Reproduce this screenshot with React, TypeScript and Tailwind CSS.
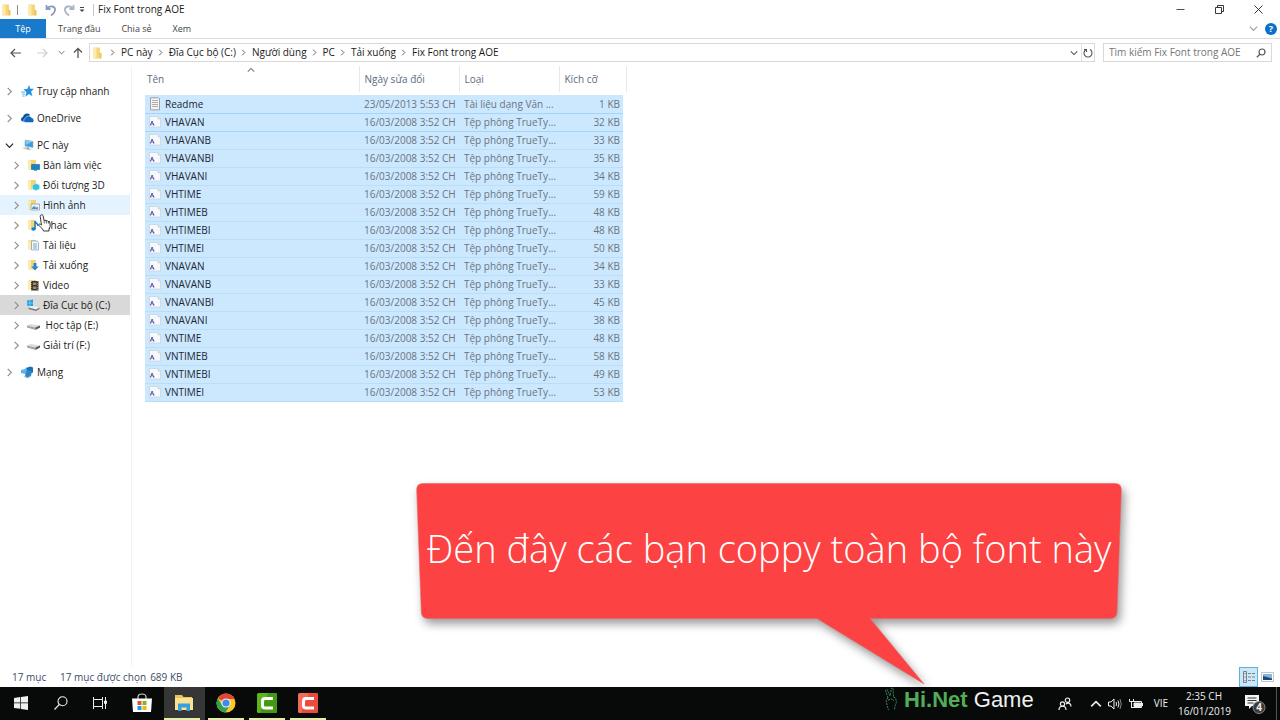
import type { ReactNode } from "react";
import clsx from "clsx";

type IconName =
  | "star"
  | "cloud"
  | "pc"
  | "desktop"
  | "cube"
  | "picture"
  | "music"
  | "document"
  | "download"
  | "video"
  | "system"
  | "drive"
  | "network";

const treeGroups: { icon: IconName; label: string; open?: boolean; children?: { icon: IconName; label: string }[] }[] = [
  { icon: "star", label: "Truy cập nhanh" },
  { icon: "cloud", label: "OneDrive" },
  {
    icon: "pc",
    label: "PC này",
    open: true,
    children: [
      { icon: "desktop", label: "Bàn làm việc" },
      { icon: "cube", label: "Đối tượng 3D" },
      { icon: "picture", label: "Hình ảnh" },
      { icon: "music", label: "Nhạc" },
      { icon: "document", label: "Tài liệu" },
      { icon: "download", label: "Tải xuống" },
      { icon: "video", label: "Video" },
      { icon: "system", label: "Đĩa Cục bộ (C:)" },
      { icon: "drive", label: "\u00a0Học tập (E:)" },
      { icon: "drive", label: "Giải trí (F:)" },
    ],
  },
  { icon: "network", label: "Mạng" },
];

const fonts: [string, number][] = [
  ["VHAVAN", 32],
  ["VHAVANB", 33],
  ["VHAVANBI", 35],
  ["VHAVANI", 34],
  ["VHTIME", 59],
  ["VHTIMEB", 48],
  ["VHTIMEBI", 48],
  ["VHTIMEI", 50],
  ["VNAVAN", 34],
  ["VNAVANB", 33],
  ["VNAVANBI", 45],
  ["VNAVANI", 38],
  ["VNTIME", 48],
  ["VNTIMEB", 58],
  ["VNTIMEBI", 49],
  ["VNTIMEI", 53],
];

const files = [
  { name: "Readme", date: "23/05/2013 5:53 CH", type: "Tài liệu dạng Văn ...", size: 1, text: true },
  ...fonts.map(([name, size]) => ({
    name,
    date: "16/03/2008 3:52 CH",
    type: "Tệp phông TrueTy...",
    size,
    text: false,
  })),
];

const path = ["PC này", "Đĩa Cục bộ (C:)", "Người dùng", "PC", "Tải xuống", "Fix Font trong AOE"];

function Chevron({ dir, className }: { dir: "right" | "down" | "up"; className?: string }) {
  const d = { right: "M3 1l4 4-4 4", down: "M1 3l4 4 4-4", up: "M1 7l4-4 4 4" }[dir];
  return (
    <svg viewBox="0 0 10 10" className={clsx("shrink-0", className)} fill="none" stroke="currentColor" strokeWidth="1.3">
      <path d={d} />
    </svg>
  );
}

function Folder({ className }: { className?: string }) {
  return (
    <svg viewBox="0 0 9 12" className={clsx("shrink-0", className)}>
      <path d="M.5.500H7v11H.5z" fill="#f5d47a" />
      <path d="M.5.500l3 1v10l-3-1z" fill="#fde9a9" />
      <path d="M6.500 6H8.500v5.500h-2z" fill="#edc35a" />
    </svg>
  );
}

function TreeIcon({ name }: { name: IconName }) {
  const art: Record<IconName, ReactNode> = {
    star: (
      <>
        <path d="M8 0l1.300 3.700 3.700.1-2.900 2.800 1.300 4.600L8 9l-3.700 2.700 1.100-4.500L2.500 4.200l3.900-.3z" fill="#2590e0" />
        <path d="M0 7h4M1 9h3M1.500 11h2" stroke="#5fb2ee" />
      </>
    ),
    cloud: (
      <>
        <path d="M1.500 9.500a2.300 2.300 0 01.5-4.400A4 4 0 019 2.800L5 9.500z" fill="#0a4f9e" />
        <path d="M4 10.500a2.300 2.300 0 01.3-4.300 3.500 3.500 0 016.400-.4 2.500 2.500 0 01.8 4.700z" fill="#1267bd" stroke="#fff" strokeWidth=".5" />
      </>
    ),
    pc: (
      <>
        <path d="M4 1l8 1.500v6L4 7z" fill="#3c9be0" stroke="#8eaec8" strokeWidth=".6" />
        <path d="M4 1l8 1.500L5 6z" fill="#82c5f3" />
        <path d="M1 9l4-1 6 2-3 1.500z" fill="#c3cbd2" />
        <path d="M7 8v2" stroke="#7b8790" />
      </>
    ),
    desktop: <path d="M4.500 5.500h8v5h-8zM7 11.500h3" fill="#1683c8" stroke="#0e659e" strokeWidth=".6" />,
    cube: <path d="M5.500 6L9 4.500 12.500 6v4L9 11.500 5.500 10z" fill="#33c3dc" stroke="#bceef6" strokeWidth=".6" />,
    picture: (
      <>
        <path d="M4 5h8.500v6H4z" fill="#e8f1f8" stroke="#8197aa" strokeWidth=".7" />
        <path d="M5 9l2-2 2 1.500L11 8v2H5z" fill="#5c91b8" />
      </>
    ),
    music: (
      <>
        <path d="M8 2v8M8 2c0 2 3 2 3 5" fill="none" stroke="#0e80d2" strokeWidth="1.500" />
        <ellipse cx="6.500" cy="10" rx="2.200" ry="1.700" fill="#0e80d2" />
      </>
    ),
    document: (
      <>
        <path d="M4.500 2H10l1.500 1.500V11h-7z" fill="#f5f9fc" stroke="#7d98ad" strokeWidth=".7" />
        <path d="M6 5h4M6 7h4M6 9h4" stroke="#4f93c4" strokeWidth=".8" />
      </>
    ),
    download: <path d="M6.500 4h3v3.500h2.300L8 11.500 4.200 7.500h2.300z" fill="#2b86cf" />,
    video: (
      <>
        <path d="M4 2h7.500v9.500H4z" fill="#37322c" />
        <path d="M6 3.500h3.500v2.500H6zM6 7.500h3.500V10H6z" fill="#9c8f6c" />
        <path d="M4.700 2v10M10.800 2v10" stroke="#d8d5cc" strokeWidth=".6" strokeDasharray="1 1" />
      </>
    ),
    system: (
      <>
        <path d="M0 1.500L2.700 1v2.700H0zM3.200.9L6 .5v3.200H3.200zM0 4.200h2.700V7L0 6.500zM3.200 4.200H6v3.300l-2.800-.4z" fill="#16a5e8" />
        <path d="M1.500 8.500l3-1.500 8 1.500-3.500 2z" fill="#f1f1f1" />
        <path d="M1.500 8.500L9 10.500l3.500-2v1.500L9 12l-7.500-2z" fill="#777" />
      </>
    ),
    drive: (
      <>
        <path d="M0 6.500L3.500 5 13 6.500 8.500 8.500z" fill="#dcdcdc" />
        <path d="M0 6.500l8.500 2V11L0 8.500z" fill="#a5a5a5" />
        <path d="M8.500 8.500L13 6.500v2L8.500 11z" fill="#545454" />
      </>
    ),
    network: (
      <>
        <path d="M4.500 2l5-1.500 2.500 1v5L7 8z" fill="#1a70b5" />
        <path d="M0 4l6-1.500v6L0 7z" fill="#5db3e8" />
        <path d="M6 4l5 1-1 5-4 2-2-2.500z" fill="#2c86c9" />
        <path d="M3 10l3 2 4-2" stroke="#92b5cf" fill="none" />
      </>
    ),
  };
  const inFolder = ["desktop", "cube", "picture", "music", "document", "download", "video"].includes(name);
  return (
    <svg viewBox="0 0 13 12" className="h-3 w-[13px] shrink-0">
      {inFolder && <path d="M1.500 1H9v9.500H1.500z" fill="#f5d479" />}
      {inFolder && <path d="M1.500 1l2.500.8V11l-2.500-.8z" fill="#fdeaae" />}
      {art[name]}
    </svg>
  );
}

function TreeRow({ icon, label, open, nested }: { icon: IconName; label: string; open?: boolean; nested?: boolean }) {
  return (
    <a
      href="#"
      className={clsx(
        "flex h-5 w-[130px] items-center whitespace-pre",
        nested ? "gap-1.5 pl-3" : "gap-[7px] pl-[5px]",
        icon === "picture" && "bg-[#e5f3ff]",
        icon === "system" && "bg-[#d9d9d9]"
      )}
    >
      <Chevron dir={open ? "down" : "right"} className={clsx("size-[9px]", open ? "text-[#222]" : "text-[#909090]")} />
      <span className={clsx("flex items-center", nested ? "gap-[3px]" : "gap-[3px]")}>
        <TreeIcon name={icon} />
        {label}
      </span>
    </a>
  );
}

function FileIcon({ text }: { text: boolean }) {
  return text ? (
    <svg viewBox="0 0 12 14" className="h-3.5 w-3">
      <path d="M1.500.8h8l1 1v11h-9z" fill="#f4f4f4" stroke="#8d8d8d" strokeWidth=".8" />
      <path d="M3 3.500h6M3 5.500h6M3 7.500h6M3 9.500h6" stroke="#9a9a9a" strokeWidth=".8" />
    </svg>
  ) : (
    <svg viewBox="0 0 12 14" className="h-3.5 w-3">
      <path d="M.5 1.500h8.500l2.500 2.500v8H.5z" fill="#f7f9fc" stroke="#c3cbd4" strokeWidth=".6" />
      <path d="M9 1.500V4h2.500" fill="#dde3ea" stroke="#b9c2cc" strokeWidth=".5" />
      <path d="M1.500 10l1.600-4 1.600 4M2.200 8.800h1.800M1 10h1.200M4 10h1.500" fill="none" stroke="#3c3a94" strokeWidth=".8" />
    </svg>
  );
}

function TitleBar() {
  return (
    <header className="flex h-[19px] items-center">
      <Folder className="ml-0.5 h-3 w-[9px]" />
      <span className="ml-1.5 h-2.5 w-px bg-[#8c8c8c]" />
      <Folder className="ml-2.5 h-3 w-[9px]" />
      <button aria-label="Hoàn tác" className="ml-2">
        <svg viewBox="0 0 12 12" className="size-3" fill="none" stroke="#8b9cc4" strokeWidth="1.8">
          <path d="M1.500 1v4h4M2 4.500C5 1 10.500 2 10 6.500 9.800 9 8 10 6 11.500" />
        </svg>
      </button>
      <button aria-label="Làm lại" className="ml-1.5">
        <svg viewBox="0 0 12 12" className="size-3" fill="none" stroke="#a9b2c6" strokeWidth="1.8">
          <path d="M10.500 1v4h-4M10 4.500C7 1 1.500 2 2 6.500 2.200 9 4 10 6 11.500" />
        </svg>
      </button>
      <button aria-label="Tùy chỉnh" className="ml-1">
        <svg viewBox="0 0 6 6" className="size-1.5">
          <path d="M1 .5h4" stroke="#444" />
          <path d="M.5 2.500h5L3 5z" fill="#444" />
        </svg>
      </button>
      <span className="ml-2 h-3 w-px bg-[#c4c4c4]" />
      <h1 className="ml-1">Fix Font trong AOE</h1>
      <div className="ml-auto flex items-center gap-[30px] pr-[17px] text-[#222]">
        <button aria-label="Thu nhỏ">
          <svg viewBox="0 0 9 9" className="size-[9px]" stroke="currentColor" strokeWidth=".8">
            <path d="M.5 4.500h8" />
          </svg>
        </button>
        <button aria-label="Khôi phục">
          <svg viewBox="0 0 9 9" className="size-[9px]" fill="none" stroke="currentColor" strokeWidth=".9">
            <path d="M.5 2.500h6v6h-6zM2.500 2.500v-2h6v6h-2" />
          </svg>
        </button>
        <button aria-label="Đóng">
          <svg viewBox="0 0 9 9" className="size-[9px]" stroke="currentColor" strokeWidth=".9">
            <path d="M.5.5l8 8M8.500.5l-8 8" />
          </svg>
        </button>
      </div>
    </header>
  );
}

function Ribbon() {
  return (
    <nav className="flex h-5 items-center border-b border-[#dadbdc] text-[9px] text-[#444]">
      <button className="h-full w-[46px] bg-[#1979ca] text-white">Tệp</button>
      <button className="ml-3">Trang đầu</button>
      <button className="ml-[21px]">Chia sẻ</button>
      <button className="ml-[21px]">Xem</button>
      <button aria-label="Mở rộng dải băng" className="ml-auto">
        <Chevron dir="down" className="size-[9px] text-[#a0a0a0]" />
      </button>
      <button
        aria-label="Trợ giúp"
        className="mr-[3px] ml-[7px] size-3 rounded-full bg-[#0a6fc9] text-center leading-3 font-bold text-white"
      >
        ?
      </button>
    </nav>
  );
}

function AddressBar() {
  return (
    <div className="flex h-[27px] items-center pr-2 pl-2.5">
      <button aria-label="Quay lại">
        <svg viewBox="0 0 12 10" className="h-2.5 w-3" fill="none" stroke="#555" strokeWidth="1.2">
          <path d="M11 5H1.500M5 1L1 5l4 4" />
        </svg>
      </button>
      <button aria-label="Tiến" className="ml-3.5">
        <svg viewBox="0 0 12 10" className="h-2.5 w-3" fill="none" stroke="#d0d0d0" strokeWidth="1.2">
          <path d="M1 5h9.500M7 1l4 4-4 4" />
        </svg>
      </button>
      <button aria-label="Vị trí gần đây" className="ml-2.5">
        <Chevron dir="down" className="size-[7px] text-[#666]" />
      </button>
      <button aria-label="Lên" className="ml-2">
        <svg viewBox="0 0 10 12" className="h-3 w-2.5" fill="none" stroke="#555" strokeWidth="1.3">
          <path d="M5 11V1.500M1 5.500l4-4 4 4" />
        </svg>
      </button>
      <div className="ml-1.5 flex h-[19px] flex-1 items-center border border-[#d9d9d9] pl-[3px]">
        <Folder className="mr-[7px] h-3 w-[9px]" />
        {path.map((part) => (
          <span key={part} className="flex items-center">
            <Chevron dir="right" className="mr-[5px] size-[7px] text-[#555]" />
            <button className="mr-1">{part}</button>
          </span>
        ))}
        <button aria-label="Vị trí trước" className="mr-[3px] ml-auto">
          <Chevron dir="down" className="size-2 text-[#555]" />
        </button>
        <button aria-label="Làm mới" className="flex h-full w-[13px] items-center justify-center border-l border-[#e4e4e4]">
          <svg viewBox="0 0 10 10" className="size-2.5" fill="none" stroke="#555" strokeWidth="1.1">
            <path d="M3 1.600A4 4 0 107 1.600M3.500 4V1.500H1" />
          </svg>
        </button>
      </div>
      <label className="ml-2 flex h-[19px] w-[169px] items-center border border-[#d9d9d9] px-[5px]">
        <input
          type="search"
          aria-label="Tìm kiếm"
          placeholder="Tìm kiếm Fix Font trong AOE"
          className="min-w-0 flex-1 outline-none placeholder:text-[#757575]"
        />
        <svg viewBox="0 0 10 10" className="size-2.5" fill="none" stroke="#555" strokeWidth="1.2">
          <circle cx="6" cy="4" r="3" />
          <path d="M4 6.200L.8 9.300" />
        </svg>
      </label>
    </div>
  );
}

function FileTable() {
  return (
    <table className="ml-[13px] w-[482px] table-fixed border-collapse self-start text-left text-[#6a7481]">
      <colgroup>
        <col className="w-[214px]" />
        <col className="w-[100px]" />
        <col className="w-[100px]" />
        <col className="w-[64px]" />
        <col />
      </colgroup>
      <thead>
        <tr className="h-[26px] text-[#5b6b7f]">
          <th className="relative border-r border-[#e8e8e8] pl-0.5 font-normal">
            Tên
            <Chevron dir="up" className="absolute top-0 left-[102px] size-2 text-[#777]" />
          </th>
          <th className="border-r border-[#e8e8e8] pl-[5px] font-normal">Ngày sửa đổi</th>
          <th className="border-r border-[#e8e8e8] pl-[5px] font-normal">Loại</th>
          <th className="pl-[5px] font-normal">Kích cỡ</th>
          <th className="border-r border-[#e8e8e8]" />
        </tr>
        <tr className="h-[3px]" />
      </thead>
      <tbody>
        {files.map((file, index) => (
          <tr key={file.name} className="h-[18px]">
            {[
              <span className="flex items-center gap-1 pl-1 text-[#1d2733]">
                <FileIcon text={file.text} />
                {file.name}
              </span>,
              file.date,
              file.type,
              file.size + " KB",
            ].map((cell, column) => (
              <td
                key={column}
                className={clsx(
                  "border-b bg-[#cce8ff] p-0 leading-4 whitespace-nowrap",
                  index < 2 ? "border-[#a3d5fb]" : "border-[#bbddf6]",
                  (column === 1 || column === 2) && "pl-[5px]",
                  column === 3 && "pr-[3px] text-right"
                )}
              >
                {cell}
              </td>
            ))}
          </tr>
        ))}
      </tbody>
    </table>
  );
}

function StatusBar() {
  return (
    <footer className="flex h-5 items-center pl-3 text-[#3b4d66]">
      <span className="w-12">17 mục</span>
      <span className="mr-1">17 mục được chọn</span>
      <span>689 KB</span>
      <button
        aria-label="Chi tiết"
        className="ml-auto flex h-5 w-[19px] items-center justify-center border border-[#5fb1d8] bg-[#cbe8f6]"
      >
        <svg viewBox="0 0 12 12" className="size-3" fill="none" stroke="#6a7884" strokeWidth=".9">
          <path d="M.5.500h3v11h-3zM5 2.500h3M9 2.500h3M5 6h3M9 6h3M5 9.500h3M9 9.500h3" />
          <path d="M1.500 2.500h1M1.500 6h1M1.500 9.500h1" stroke="#c0392b" />
        </svg>
      </button>
      <button aria-label="Hình lớn" className="mr-1.5 ml-[3px]">
        <svg viewBox="0 0 13 10" className="h-2.5 w-[13px]">
          <path d="M.5.5h12v9H.5z" fill="#fff" stroke="#a5adb5" strokeWidth=".7" />
          <path d="M2 2h9v6H2z" fill="#82b6e3" />
          <path d="M2 4l4 1 5 1.500V8H2z" fill="#1d4c74" />
        </svg>
      </button>
    </footer>
  );
}

function Callout() {
  return (
    <div className="absolute top-[483px] left-[416px] w-[706px]">
      <svg viewBox="0 0 706 202" className="block w-full drop-shadow-[3px_5px_5px_rgba(0,0,0,0.4)]">
        <path
          d="M7 .5H699Q705.500.5 705.300 7L701 129Q700.800 135.500 694 135.500H454L508 201 401 135.500H12Q5.500 135.500 5.300 129L.7 7Q.5.500 7 .5z"
          fill="#fc4242"
          stroke="#e06a6a"
          strokeWidth=".6"
        />
      </svg>
      <p className="absolute inset-x-0 top-0 flex h-[130px] items-center justify-center text-[38px] font-light whitespace-nowrap text-white">
        Đến đây các bạn coppy toàn bộ font này
      </p>
    </div>
  );
}

function HandCursor() {
  return (
    <svg viewBox="0 0 14 18" className="absolute top-[214px] left-[37px] h-[18px] w-3.5">
      <path
        d="M4 1c1-.6 2 0 2.200 1L7 6.500l1-.5 1 .8 1.200-.3.8 1 1.300.2.7 1.300.2 3.500-1.200 2.500v2H6.500l-1-2L2 11.500c-.8-1.200.5-2 1.500-1.200l1 .7L3.200 2.500C3 1.800 3.400 1.200 4 1z"
        fill="#fff"
        stroke="#222"
        strokeWidth=".9"
      />
      <path d="M7 6.500l.4 3M9.200 7l.3 2.500M11.200 7.700l.2 2" stroke="#222" strokeWidth=".7" />
    </svg>
  );
}

function TaskButton({ label, active, running, children }: { label: string; active?: boolean; running?: boolean; children: ReactNode }) {
  return (
    <button aria-label={label} className={clsx("flex w-[41px] flex-col", active && "bg-[#363636]")}>
      <span className="flex w-full flex-1 items-center justify-center">{children}</span>
      <span
        className={clsx("h-0.5 w-9", active ? "self-start" : "self-center", running ? "bg-[#e3efa9]" : "bg-transparent")}
      />
    </button>
  );
}

function Camtasia({ from, to }: { from: string; to: string }) {
  return (
    <svg viewBox="0 0 20 20" className="size-5">
      <rect width="20" height="20" rx="1.500" fill={from} />
      <path d="M11 0h7.500Q20 0 20 1.500v17q0 1.500-1.500 1.500H3z" fill={to} />
      <path d="M16 5.500H8Q5.500 5.500 5.500 8v4.500Q5.500 15 8 15h8" fill="none" stroke="#fff" strokeWidth="3" />
    </svg>
  );
}

function Taskbar() {
  return (
    <footer className="relative flex h-[33px] bg-[#080a09] text-[#eee]">
      <TaskButton label="Bắt đầu">
        <svg viewBox="0 0 14 14" className="size-3.5" fill="#f0f0f0">
          <path d="M0 2l6.300-.9v5.500H0zM7 1l7-1v6.600H7zM0 7.300h6.300v5.500L0 12zM7 7.300h7V14l-7-1z" />
        </svg>
      </TaskButton>
      <TaskButton label="Tìm kiếm">
        <svg viewBox="0 0 14 14" className="mr-0.5 size-3.5" fill="none" stroke="#eee" strokeWidth="1.100">
          <circle cx="8.500" cy="5.200" r="4.500" />
          <path d="M5.300 8.500L.5 13.500" />
        </svg>
      </TaskButton>
      <TaskButton label="Xem tác vụ">
        <svg viewBox="0 0 14 14" className="mr-1.5 size-3.5" fill="none" stroke="#eee">
          <path d="M.5 1v2.500h9V1M.5 13v-2.500h9V13M.5 3.500v7M9.500 3.500v7M12.500 1v12M11.500 5h2v2.500h-2z" />
        </svg>
      </TaskButton>
      <TaskButton label="Cửa hàng">
        <svg viewBox="0 0 20 20" className="mr-1 size-5">
          <path d="M6 6V4q0-3 4-3t4 3v2" fill="none" stroke="#ccc" strokeWidth="1.200" />
          <path d="M0 5.500h20L19 19H1z" fill="#fff" />
          <path d="M5.500 8h4v4h-4z" fill="#e8502b" />
          <path d="M10.500 8h4v4h-4z" fill="#7eb72a" />
          <path d="M5.500 13h4v4h-4z" fill="#1e9be0" />
          <path d="M10.500 13h4v4h-4z" fill="#f6b41b" />
        </svg>
      </TaskButton>
      <TaskButton label="File Explorer" active running>
        <svg viewBox="0 0 20 18" className="mr-0.5 h-[18px] w-5">
          <path d="M1 1h7l1.500 2H18v4H1z" fill="#eac35a" />
          <path d="M1 4h18v12H1z" fill="#fbe292" />
          <path d="M4 17V9.500h12V17h-3.500v-3.500h-5V17z" fill="#3aa0dc" />
        </svg>
      </TaskButton>
      <TaskButton label="Chrome" running>
        <svg viewBox="0 0 20 20" className="size-5">
          <circle cx="10" cy="10" r="9.500" fill="#fbc926" />
          <path d="M10 10L1.800 5.200A9.500 9.500 0 0118.700 6H10z" fill="#e24535" />
          <path d="M1.800 5.200A9.500 9.500 0 009.500 19.500L14 12l-4-2-4 2z" fill="#2ea24f" />
          <circle cx="10" cy="10" r="4.600" fill="#f3f6f8" />
          <circle cx="10" cy="10" r="3.600" fill="#4388ef" />
        </svg>
      </TaskButton>
      <TaskButton label="Camtasia" running>
        <Camtasia from="#5bb51e" to="#439a12" />
      </TaskButton>
      <TaskButton label="Camtasia Recorder" running>
        <Camtasia from="#f46a58" to="#ea4b3c" />
      </TaskButton>

      <div className="ml-auto flex items-center">
        <svg viewBox="0 0 14 24" className="mb-2.5 h-6 w-3.5" fill="none" stroke="#3c8658" strokeDasharray="2 1">
          <path d="M4 11L1.500 3.500 3 2.500 6 9 7.500 1 9 1 9.500 10M4 11l-2 2 1 5 1.500 5M9.500 10l2 1 1 4-1.500 4-.5 4M4 13l4-1 2 2" />
        </svg>
        <p className="ml-1.5 mb-2 font-['Liberation_Sans',sans-serif] text-[22px] leading-6 whitespace-nowrap text-[#f0f0f0]">
          <span className="font-bold text-[#4fae57]">Hi.Net</span> Game
        </p>
        <button aria-label="Danh bạ" className="ml-6">
          <svg viewBox="0 0 14 14" className="size-3.5" fill="none" stroke="#eee" strokeWidth="1.200">
            <circle cx="9.500" cy="3.200" r="2.200" />
            <circle cx="4.500" cy="7" r="2.100" />
            <path d="M1 13c0-5 7-5 7 0M8 7c2.500-2 5-.5 5 2.500" />
          </svg>
        </button>
        <button aria-label="Hiện biểu tượng ẩn" className="ml-[18px]">
          <Chevron dir="up" className="size-3" />
        </button>
        <button aria-label="Âm lượng" className="ml-1.5">
          <svg viewBox="0 0 14 12" className="h-3 w-3.5" fill="none" stroke="#eee">
            <path d="M.5 4h2.500l3-3v10L3 8H.5zM8 4q1.200 2 0 4M10 2.500q2 3.500 0 7" />
            <path d="M12 1q2.500 5 0 10" stroke="#888" />
          </svg>
        </button>
        <button aria-label="Pin" className="ml-[7px]">
          <svg viewBox="0 0 14 12" className="h-3 w-3.5" fill="none" stroke="#eee">
            <path d="M4 3.500h8.500v6H3M13.500 5v3M.5 1v2.500h4V1M2.500 3.500V10" />
            <path d="M5 5h6.500v3.500H5z" fill="#eee" />
          </svg>
        </button>
        <button className="ml-[11px]">VIE</button>
        <time className="ml-2.5 w-[52px] text-center leading-[15px] whitespace-nowrap">
          2:35 CH
          <br />
          16/01/2019
        </time>
        <button aria-label="Thông báo" className="relative ml-[15px] h-5 w-[21px]">
          <svg viewBox="0 0 21 20" className="h-5 w-[21px]">
            <path d="M0 1h14v11H7l-3 3v-3H0z" fill="#f4f4f4" />
            <path d="M2.500 4h9M2.500 6.500h9M2.500 9h6" stroke="#333" />
            <circle cx="14" cy="13.500" r="6" fill="#3a3a3a" stroke="#8a8a8a" />
          </svg>
          <span className="absolute top-[7px] left-[8px] w-3 text-center leading-[13px] font-bold">4</span>
        </button>
        <span className="mr-[3px] ml-2.5 h-[33px] w-px bg-[#555]" />
      </div>
    </footer>
  );
}

export default function App() {
  return (
    <div className="relative flex min-h-screen flex-col overflow-hidden bg-white font-['Open_Sans','Noto_Sans',sans-serif] text-[10px] text-[#1b1b1b]">
      <TitleBar />
      <Ribbon />
      <AddressBar />
      <main className="flex flex-1">
        <ul className="flex w-[132px] shrink-0 flex-col gap-[7px] border-r border-[#f3f3f3] pt-[15px]">
          {treeGroups.map((group) => (
            <li key={group.label}>
              <TreeRow icon={group.icon} label={group.label} open={group.open} />
              {group.children && (
                <ul>
                  {group.children.map((child) => (
                    <li key={child.label}>
                      <TreeRow icon={child.icon} label={child.label} nested />
                    </li>
                  ))}
                </ul>
              )}
            </li>
          ))}
        </ul>
        <FileTable />
      </main>
      <StatusBar />
      <Taskbar />
      <HandCursor />
      <Callout />
    </div>
  );
}
